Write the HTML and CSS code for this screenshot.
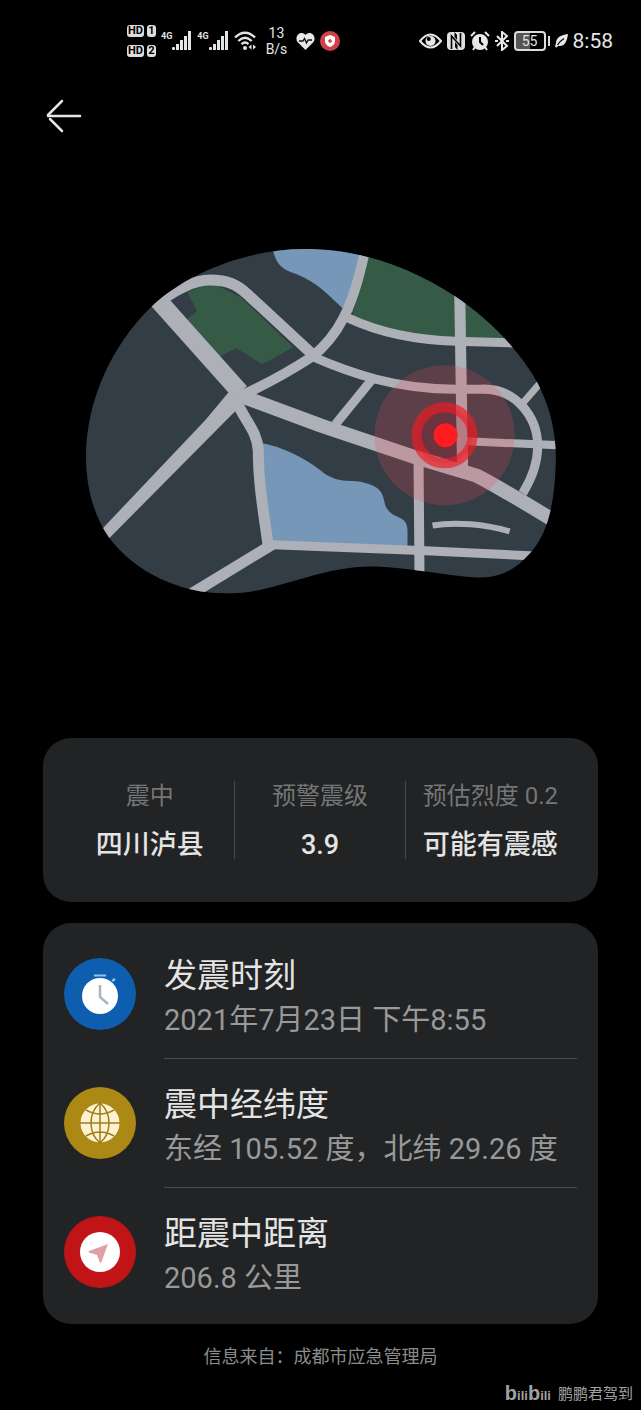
FILE: index.html
```html
<!DOCTYPE html>
<html lang="zh-CN">
<head>
<meta charset="utf-8">
<meta name="viewport" content="width=device-width, initial-scale=1">
<title>地震预警</title>
<link rel="stylesheet" href="styles.css">
</head>
<body>
<div class="status">
  <div class="status-group">
    <div class="hd-grid">
      <span class="chip">HD</span><span class="chip">1</span>
      <span class="chip">HD</span><span class="chip">2</span>
    </div>
    <div class="signal">
      <span class="net">4G</span>
      <svg width="20" height="20" viewBox="0 0 20 20" fill="#e4e4e4"><rect y="16" width="3" height="3" rx="1"/><rect x="4" y="13" width="3" height="6"/><rect x="8" y="9" width="3" height="10"/><rect x="12" y="5" width="3" height="14"/><rect x="16" y="0" width="3" height="19"/></svg>
    </div>
    <div class="signal">
      <span class="net">4G</span>
      <svg width="20" height="20" viewBox="0 0 20 20" fill="#e4e4e4"><rect y="16" width="3" height="3" rx="1"/><rect x="4" y="13" width="3" height="6"/><rect x="8" y="9" width="3" height="10"/><rect x="12" y="5" width="3" height="14"/><rect x="16" y="0" width="3" height="19"/></svg>
    </div>
    <svg width="23" height="20" viewBox="0 0 23 20" fill="none" stroke="#e4e4e4" stroke-width="2.4"><path d="M1 6.5Q11 -3 21 6.5M4.3 10Q11 3.5 17.7 10M7.5 13.2Q11 9.8 14.5 13.2"/><circle cx="11" cy="17" r="2" fill="#e4e4e4" stroke="none"/><path d="M17.5 13.5v5l-3-2.5zM19 13.5v5l3-2.5z" fill="#e4e4e4" stroke="none"/></svg>
    <div class="rate"><span>13</span><span>B/s</span></div>
    <svg width="19" height="18" viewBox="0 0 19 18"><path d="M9.500 18L1.500 10C-2 5 4-2.500 9.500 3C15-2.500 21 5 17.500 10Z" fill="#e8e8e8"/><path d="M3 9h4l1.500-2.500 2 4.500 1.700-3H16" fill="none" stroke="#111" stroke-width="1.400"/></svg>
    <svg width="20" height="20" viewBox="0 0 20 20"><circle cx="10" cy="10" r="10" fill="#cf4249"/><path d="M10 4l5 2v4q0 4-5 6q-5-2-5-6V6z" fill="#fff"/><path d="M10 8v4M8 10h4" stroke="#cf4249" stroke-width="1.500"/></svg>
  </div>
  <div class="status-group">
    <svg width="23" height="16" viewBox="0 0 23 16"><path d="M1 8Q11.500-5 22 8Q11.500 21 1 8Z" fill="none" stroke="#e8e8e8" stroke-width="2"/><circle cx="11.500" cy="8" r="5" fill="#e8e8e8"/><circle cx="9.800" cy="6" r="2" fill="#000"/></svg>
    <svg width="18" height="18" viewBox="0 0 18 18"><rect width="18" height="18" rx="4" fill="#e0e0e0"/><path d="M4.500 17V4l9 10V1" fill="none" stroke="#000" stroke-width="1.600"/><path d="M7.500 0l2.500 3v5L7.500 5zM10.500 18l-2.500-3v-5l2.500 3z" fill="#000"/></svg>
    <svg width="20" height="20" viewBox="0 0 20 20" stroke="#e8e8e8" stroke-width="2" fill="none"><circle cx="10" cy="11" r="7" fill="#e8e8e8"/><path d="M1 5l4-4M15 1l4 4M5 16l-2 3M15 16l2 3"/><path d="M10 6v5l3 3" stroke="#000"/></svg>
    <svg width="14" height="20" viewBox="0 0 14 20" fill="none" stroke="#e8e8e8" stroke-width="2"><path d="M2 5l10 10-5 4V1l5 4L2 15"/><path d="M0 10h3M11 10h3"/></svg>
    <div class="battery"><span class="battery-body">55</span><span class="battery-tip"></span></div>
    <svg width="13" height="14" viewBox="0 0 13 14"><path d="M13 0C5 1 1 4 1 9l-1 4 1.500 0.500L3 12C10 13 12 7 13 0Z" fill="#e8e8e8"/><path d="M2.500 11Q5 7 9 4.500" fill="none" stroke="#000" stroke-width="1.200"/></svg>
    <span class="clock">8:58</span>
  </div>
</div>

<header class="topbar">
  <button class="back" type="button" aria-label="返回">
    <svg width="36" height="34" viewBox="0 0 36 34" fill="none" stroke="#e6e6e6" stroke-width="2.500" stroke-linecap="round"><path d="M2 17h32M16 2L2 16M4 20l12 12"/></svg>
  </button>
</header>

<main>
  <svg class="map" viewBox="80 240 480 360" role="img" aria-label="震中位置地图">
    <defs>
      <clipPath id="land"><path d="M86 457C86 400 112 345 151 307C188 271 250 249 304 249C362 249 411 268 454 296C490 320 520 352 537 383C550 408 556 435 555 463C554 500 548 532 530 552C515 569 500 577 480 577C455 577 405 566 370 566C318 566 275 593 227 593C180 593 135 572 109 537C94 516 86 487 86 457Z"/></clipPath>
    </defs>
    <g clip-path="url(#land)">
      <rect x="80" y="240" width="480" height="360" fill="#333d46"/>
      <path d="M272 245C274 265 284 270 293 273C315 281 325 292 344 310L352 312L367 245Z" fill="#7697b7"/>
      <path d="M258 442C285 447 304 458 320 470C336 484 350 479 363 482C389 488 380 501 388 510C395 519 407 515 407 530V548H268Z" fill="#7697b7"/>
      <path d="M187 292L197 311L187 319L218 357L236 348L262 364L293 347L240 297L212 283Z" fill="#355a46"/>
      <path d="M366 245L352 317Q400 340 455 340H520V245Z" fill="#355a46"/>
      <g fill="none" stroke="#adb0b6">
        <path d="M156 298L240 392" stroke-width="18"/>
        <path d="M155 305C178 287 195 280 210 280C228 280 237 285 247 294L312 354" stroke-width="11"/>
        <path d="M240 396C268 383 285 374 311 357C337 337 353 308 365 248" stroke-width="10"/>
        <path d="M348 318C380 333 420 340 455 341L520 343" stroke-width="9"/>
        <path d="M459 285L462 470" stroke-width="11"/>
        <path d="M311 356C350 373 395 389 455 389H480C515 387 537 417 537 446C537 464 530 480 522 493" stroke-width="9"/>
        <path d="M541 381L522 403" stroke-width="7"/>
        <path d="M371 380L335 424" stroke-width="9"/>
        <path d="M236 394L320 425L415 457L475 475Q485 479 553 520" stroke-width="14"/>
        <path d="M466 441L560 445" stroke-width="8"/>
        <path d="M236 400C243 419 257 430 258 450C258 482 263 510 268 546" stroke-width="11"/>
        <path d="M272 544L190 594" stroke-width="11"/>
        <path d="M266 544L420 550L545 556" stroke-width="9"/>
        <path d="M418 458L419 580" stroke-width="10"/>
        <path d="M432 525C455 521 485 524 509 531" stroke-width="6"/>
      </g>
      <path d="M230 390L205 420L95 536L103 544L226 420L244 402Z" fill="#adb0b6"/>
    </g>
    <circle cx="444" cy="435" r="70" fill="#f04858" fill-opacity=".22"/>
    <circle cx="444" cy="435" r="28" fill="#a00818" fill-opacity=".2" stroke="#ee1c24" stroke-opacity=".68" stroke-width="10"/>
    <circle cx="445" cy="435" r="12" fill="#ff1b20"/>
  </svg>

  <section class="card summary">
    <div class="stat"><span class="stat-label">震中</span><strong class="stat-value">四川泸县</strong></div>
    <div class="stat"><span class="stat-label">预警震级</span><strong class="stat-value">3.9</strong></div>
    <div class="stat"><span class="stat-label">预估烈度 0.2</span><strong class="stat-value">可能有震感</strong></div>
  </section>

  <section class="card details">
    <div class="row">
      <svg class="row-icon" viewBox="0 0 72 72"><circle cx="36" cy="36" r="36" fill="#0e5eb0"/><circle cx="36" cy="38" r="18" fill="#fff"/><path d="M30 17.500h12" stroke="#8fc4f0" stroke-width="2"/><path d="M48 23l3-2" stroke="#8fc4f0" stroke-width="2.500"/><path d="M36 27v12l8 7" fill="none" stroke="#aab4be" stroke-width="2.500"/></svg>
      <div class="row-body"><h2>发震时刻</h2><p>2021年7月23日 下午8:55</p></div>
    </div>
    <div class="row">
      <svg class="row-icon" viewBox="0 0 72 72"><circle cx="36" cy="36" r="36" fill="#ac8914"/><circle cx="36" cy="36" r="19.500" fill="#fdf1cf"/><g fill="none" stroke="#9c7d1c" stroke-width="1.500"><path d="M16 36h40M36 16v40M22 23Q36 31 50 23M22 49Q36 41 50 49"/><path d="M36 16C24 26 24 46 36 56C48 46 48 26 36 16"/></g></svg>
      <div class="row-body"><h2>震中经纬度</h2><p>东经 105.52 度，北纬 29.26 度</p></div>
    </div>
    <div class="row">
      <svg class="row-icon" viewBox="0 0 72 72"><circle cx="36" cy="36" r="36" fill="#c11416"/><circle cx="36" cy="36" r="20" fill="#fff"/><path d="M44 28L25 35q-1 1 0 1.500l8 2.500 2.500 7q1 1.500 2 0Z" fill="#dfa1a8"/></svg>
      <div class="row-body"><h2>距震中距离</h2><p>206.8 公里</p></div>
    </div>
  </section>

  <p class="source">信息来自：成都市应急管理局</p>
</main>

<footer class="credit">
  <span class="brand"><b>b</b>ili<b>b</b>ili</span>
  <span>鹏鹏君驾到</span>
</footer>
</body>
</html>
```
FILE: styles.css
```css
* { box-sizing: border-box; }
body {
  margin: 0;
  background: #000;
  color: #e4e4e4;
  font-family: Roboto, "Noto Sans CJK SC", sans-serif;
}
svg { display: block; flex: none; }
h2, p { margin: 0; }

.status {
  display: flex;
  justify-content: space-between;
  align-items: center;
  height: 82px;
  padding: 0 28px 0 127px;
}
.status-group { display: flex; align-items: center; gap: 5px; }
.hd-grid { display: grid; grid-template-columns: 17px 9px; gap: 8px 3px; }
.chip {
  height: 12px;
  border-radius: 3px;
  background: #dedede;
  color: #000;
  font-size: 11px;
  font-weight: 700;
  line-height: 12px;
  text-align: center;
}
.signal { display: flex; align-items: flex-start; }
.net { font-size: 9px; font-weight: 700; line-height: 10px; }
.rate {
  display: flex;
  flex-direction: column;
  align-items: center;
  margin: 0 4px;
  font-size: 14px;
  line-height: 16px;
}
.battery { display: flex; align-items: center; gap: 2px; }
.battery-body {
  width: 32px;
  height: 20px;
  border: 2px solid #dcdcdc;
  border-radius: 4px;
  background: linear-gradient(90deg, #555 50%, #000 50%);
  font-size: 14px;
  line-height: 16px;
  text-align: center;
}
.battery-tip { width: 2px; height: 10px; background: #dcdcdc; }
.clock { font-size: 21px; line-height: 24px; }

.topbar { height: 158px; padding: 17px 46px; }
.back { display: block; padding: 0; border: 0; background: none; cursor: pointer; }

.map { width: 75%; height: auto; margin: 0 auto; }

.card {
  margin: 0 43px;
  border-radius: 28px;
  background: #212324;
}
.summary {
  display: grid;
  grid-template-columns: repeat(3, 1fr);
  margin-top: 137px;
  padding: 43px 22px;
}
.stat {
  display: flex;
  flex-direction: column;
  align-items: center;
  gap: 20px;
  border-right: 1px solid #47494a;
  white-space: nowrap;
}
.stat:last-child { border-color: transparent; }
.stat-label { color: #747677; font-size: 24px; line-height: 30px; }
.stat-value { font-size: 27px; font-weight: 500; line-height: 28px; }

.details { margin-top: 21px; padding: 7px 21px; }
.row { display: flex; align-items: center; gap: 28px; }
.row-icon { width: 72px; height: 72px; }
.row-body {
  flex: 1;
  padding: 24px 0 16px;
  border-bottom: 1px solid #4b4d4e;
}
.row:last-child .row-body { border-color: transparent; }
.row h2 { font-size: 33px; font-weight: 400; line-height: 44px; }
.row p { color: #98999a; font-size: 29px; line-height: 44px; }

.source {
  margin-top: 21px;
  color: #8c8c8c;
  font-size: 18px;
  line-height: 24px;
  text-align: center;
}
.credit {
  display: flex;
  justify-content: flex-end;
  align-items: center;
  gap: 7px;
  margin-top: 12px;
  padding-right: 8px;
  color: #a0a0a0;
  font-size: 15px;
  line-height: 24px;
}
.brand { font-family: "Liberation Sans", sans-serif; font-size: 13px; font-weight: 700; }
.brand b { font-size: 20px; }
```
